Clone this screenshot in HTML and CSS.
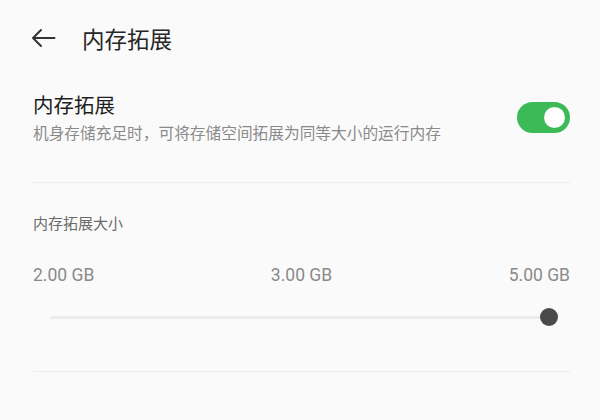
FILE: index.html
```html
<!DOCTYPE html>
<html lang="zh-CN">
<head>
<meta charset="utf-8">
<link rel="stylesheet" href="styles.css">
</head>
<body>
<div class="header">
  <svg class="back" width="26" height="24" viewBox="0 0 26 24" aria-hidden="true">
    <path d="M24.5 12H3M11 4L3 12L11 20" fill="none" stroke="#333" stroke-width="2" stroke-linecap="round" stroke-linejoin="round"/>
  </svg>
  <div class="title">内存拓展</div>
</div>
<div class="content">
  <div class="row">
    <div class="text">
      <div class="heading">内存拓展</div>
      <div class="sub">机身存储充足时，可将存储空间拓展为同等大小的运行内存</div>
    </div>
    <div class="toggle"><div class="knob"></div></div>
  </div>
  <div class="divider"></div>
  <div class="size">
    <div class="label">内存拓展大小</div>
    <div class="ticks">
      <span>2.00 GB</span>
      <span>3.00 GB</span>
      <span>5.00 GB</span>
    </div>
    <div class="slider">
      <div class="track"></div>
      <div class="thumb"></div>
    </div>
  </div>
  <div class="divider"></div>
</div>
</body>
</html>
```

FILE: styles.css
```css
html, body {
  margin: 0;
  padding: 0;
  background: #fafafa;
  font-family: "Noto Sans CJK SC", "Noto Sans", sans-serif;
  color: #222;
}
.header {
  display: flex;
  align-items: center;
  height: 76px;
  padding-left: 30px;
}
.back {
  display: block;
}
.title {
  margin-left: 26px;
  font-size: 22.5px;
  line-height: 30px;
  color: #262626;
}
.content {
  padding: 0 30px 0 33px;
}
.row {
  display: flex;
  align-items: center;
  justify-content: space-between;
  padding-top: 14px;
  padding-bottom: 38px;
}
.heading {
  font-size: 20.5px;
  line-height: 28px;
  color: #1e1e1e;
}
.sub {
  margin-top: 4px;
  font-size: 15.7px;
  line-height: 22px;
  color: #8a8a8a;
}
.toggle {
  width: 53px;
  height: 31px;
  border-radius: 16px;
  background: #3cba57;
  display: flex;
  align-items: center;
  justify-content: flex-end;
  padding-right: 5px;
  box-sizing: border-box;
}
.knob {
  width: 21px;
  height: 21px;
  border-radius: 50%;
  background: #fff;
}
.divider {
  height: 1px;
  background: #ececec;
}
.size {
  padding-top: 29px;
  padding-bottom: 44px;
}
.label {
  font-size: 15px;
  line-height: 22px;
  color: #6a6a6a;
}
.ticks {
  margin-top: 30px;
  display: flex;
  justify-content: space-between;
  font-family: Roboto, "Noto Sans", sans-serif;
  font-size: 17.5px;
  line-height: 22px;
  color: #8a8a8a;
}
.slider {
  margin: 21px 12px 0 17px;
  height: 20px;
  display: flex;
  align-items: center;
}
.track {
  flex: 1;
  height: 3px;
  background: #ebebeb;
  border-radius: 2px;
}
.thumb {
  width: 18px;
  height: 18px;
  border-radius: 50%;
  background: #4a4a4a;
  margin-left: -9px;
}
```
